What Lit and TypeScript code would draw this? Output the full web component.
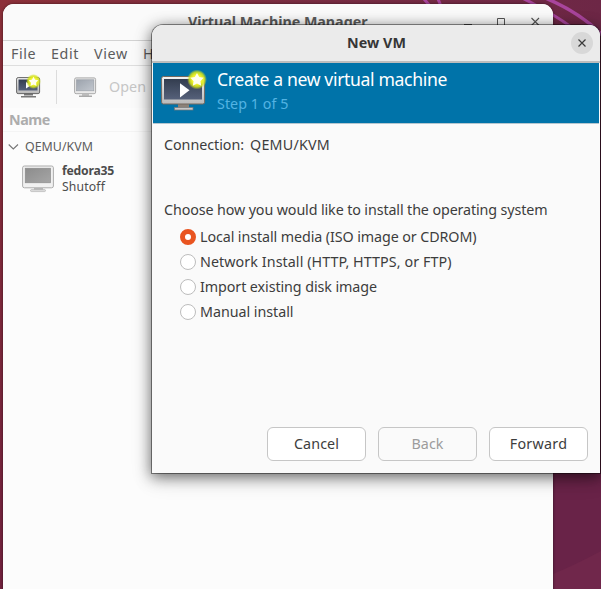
import { LitElement, html, css, svg } from "lit";
import { customElement, property, state } from "lit/decorators.js";

/** A line of text whose tracking is adjusted so that it takes the given width. */
@customElement("fit-text")
class FitText extends LitElement {
  @property() text = "";
  @property({ type: Number }) fit = 0;
  @state() private tracking = 0;

  static styles = css`
    :host { display: inline-block; white-space: pre; line-height: 20px; flex: none; }
    .run { display: inline-block; }
  `;

  firstUpdated() {
    const run = this.renderRoot.querySelector(".run") as HTMLElement;
    const natural = run.getBoundingClientRect().width;
    if (this.fit && natural) this.tracking = (this.fit - natural) / this.text.length;
  }

  render() {
    return html`<span class="run" style="letter-spacing:${this.tracking}px">${this.text}</span>`;
  }
}

const gradients = svg`
  <defs>
    <linearGradient id="case" x1="0" y1="0" x2="0" y2="1">
      <stop offset="0" stop-color="#f4f4f4"/><stop offset="1" stop-color="#b9b9b9"/>
    </linearGradient>
    <linearGradient id="dark" x1="0" y1="0" x2="0" y2="1">
      <stop offset="0" stop-color="#333d4f"/><stop offset="1" stop-color="#56617a"/>
    </linearGradient>
    <linearGradient id="pale" x1="0" y1="0" x2="1" y2="1">
      <stop offset="0" stop-color="#9ca3ad"/><stop offset="1" stop-color="#c2c7ce"/>
    </linearGradient>
    <linearGradient id="grey" x1="0" y1="0" x2="1" y2="1">
      <stop offset="0" stop-color="#8c8c8c"/><stop offset="1" stop-color="#a6a6a6"/>
    </linearGradient>
    <radialGradient id="glow">
      <stop offset="0" stop-color="#fffc9a"/><stop offset=".5" stop-color="#eef22a"/>
      <stop offset=".75" stop-color="#d3e31c" stop-opacity=".85"/><stop offset="1" stop-color="#c9dc22" stop-opacity="0"/>
    </radialGradient>
    <linearGradient id="wall" x1="0" y1="0" x2="601" y2="0" gradientUnits="userSpaceOnUse">
      <stop offset="0" stop-color="#8c3039"/><stop offset=".55" stop-color="#782c42"/><stop offset="1" stop-color="#6d2746"/>
    </linearGradient>
    <linearGradient id="edge" x1="0" y1="0" x2="0" y2="1">
      <stop offset="0" stop-color="#8c3039"/><stop offset="1" stop-color="#73223f"/>
    </linearGradient>
  </defs>`;

const star = "M0-6 2-2.2 6-1.6 3.1 1.5 3.8 5.6 0 3.7-3.8 5.6-3.1 1.5-6-1.6-2-2.2Z";

@customElement("app-root")
class AppRoot extends LitElement {
  @state() private choice = 0;

  private options: [string, number][] = [
    ["Local install media (ISO image or CDROM)", 276.5],
    ["Network Install (HTTP, HTTPS, or FTP)", 251.5],
    ["Import existing disk image", 177],
    ["Manual install", 93.5],
  ];

  static styles = css`
    :host { display: block; font-family: "Noto Sans", "Open Sans", sans-serif; font-size: 14.3px; color: #3d3d3d; }
    .desktop { position: relative; width: 601px; height: 589px; overflow: hidden; background: #6a2346; }
    .wallpaper { position: absolute; inset: 0; }
    svg { display: block; flex: none; }
    .manager { position: absolute; left: 3px; top: 4px; width: 550px; height: 600px; background: #fcfcfc;
      border-radius: 11px 11px 0 0; box-shadow: 0 0 3px rgba(0,0,0,.55); color: #5c5c5c; overflow: hidden; }
    .title { box-sizing: border-box; height: 37px; border-bottom: 1px solid #d2d2d2; display: flex; padding: 8px 13px 0 185px;
      background: #fafafa; font-weight: 700; justify-content: space-between; }
    .controls { display: flex; gap: 25px; padding-top: 4px; }
    .menu { box-sizing: border-box; height: 25px; border-bottom: 1px solid #dedede; display: flex; gap: 15px; padding: 3px 0 0 8px; background: #fafafa; }
    .tools { box-sizing: border-box; height: 42px; display: flex; background: #fafafa; padding-left: 13px; color: #c6c6c6; }
    .tools .new { margin-top: 8px; }
    .rule { width: 1px; height: 34px; background: #dcdcdc; margin: 4px 17px 0 15px; }
    .tools .screen { margin-top: 11px; }
    .tools .open { margin: 11px 0 0 12px; }
    .head { box-sizing: border-box; height: 24px; border-bottom: 1px solid #f4f4f4; font-weight: 700; color: #adadad; padding: 2px 0 0 6px; }
    .group { display: flex; align-items: center; height: 30px; padding-left: 5px; gap: 6px; font-size: 12.4px; }
    .vm { display: flex; padding: 3px 0 0 19px; gap: 8px; font-size: 12.2px; color: #4c4c4c; }
    .lines { display: grid; grid-auto-rows: 16px; margin-top: -2px; }
    .lines fit-text { line-height: 16px; height: 16px; }
    .strong { font-weight: 700; }
    .dialog { position: absolute; left: 152px; top: 25px; width: 448px; height: 448px; background: #fafafa;
      border-radius: 11px 11px 0 0; box-shadow: 0 0 0 1px rgba(0,0,0,.42), 0 3px 14px 1px rgba(0,0,0,.5), 0 6px 22px rgba(0,0,0,.16); }
    .bar { box-sizing: border-box; height: 38px; background: #ebebeb; border-bottom: 2px solid #bdbdbd; border-radius: 11px 11px 0 0;
      display: flex; align-items: center; padding: 0 7px 0 195px; justify-content: space-between; font-weight: 700; color: #363636; }
    .close { width: 22px; height: 22px; border-radius: 50%; background: #d8d8d8; display: grid; place-items: center; }
    .banner { box-sizing: border-box; height: 61px; background: #0073a9; border-bottom: 1px solid #b5c6cf; display: flex; padding: 6px 0 0 8px; gap: 10px; color: #fff; margin: 0 1px; }
    .banner .big { font-size: 17.6px; }
    .banner .step { color: #53b3e3; margin-top: 5px; }
    .col { display: flex; flex-direction: column; }
    .body { padding: 11px 0 0 12px; }
    .conn { display: flex; gap: 6px; height: 65px; }
    .option { display: flex; align-items: center; height: 25px; gap: 4px; padding-left: 16px; }
    .options { margin-top: 4px; }
    .dot { box-sizing: border-box; width: 16px; height: 16px; border-radius: 50%; border: 1px solid #bdbdbd; background: #fff; }
    .dot.on { border: 5.5px solid #e95420; }
    .actions { display: flex; gap: 12px; margin: 103px 0 0 103px; }
    .btn { box-sizing: border-box; width: 99px; height: 34px; border: 1px solid #c6c6c6; border-radius: 6px; background: #fff; display: flex; align-items: center; justify-content: center; }
    .btn.off { background: #fafafa; color: #9c9c9c; }
  `;

  render() {
    return html`<div class="desktop">
      <svg class="wallpaper" width="601" height="589" viewBox="0 0 601 589">
        ${gradients}
        <rect width="601" height="589" fill="#692348"/>
        <rect width="601" height="130" fill="url(#wall)"/>
        <rect width="6" height="589" fill="url(#edge)"/>
        <path d="M553 574Q575 565 601 551V589H553Z" fill="#70274b"/>
        <g fill="none" stroke="#a9459d" stroke-width="3">
          <path d="M424-1 430 6M438-1 441 6M518-4Q562 17 590 42"/>
          <path d="M543-3Q582 13 605 38" stroke-width="3.5"/>
        </g>
      </svg>

      <div class="manager">
        <div class="title"><fit-text text="Virtual Machine Manager" fit="179.5"></fit-text>
          <div class="controls">
            <svg width="8" height="12" viewBox="0 0 8 12"><path d="M0 8.5H8" stroke="#555"/></svg>
            <svg width="9" height="12" viewBox="0 0 9 12"><path d="M.5 2.5H7.5V10.5H.5Z" fill="none" stroke="#555"/></svg>
            <svg width="9" height="12" viewBox="0 0 9 12"><path d="M.5 2 8 9.5M8 2 .5 9.5" stroke="#555" stroke-width="1.1"/></svg>
          </div>
        </div>
        <div class="menu">
          <fit-text text="File" fit="25"></fit-text><fit-text text="Edit" fit="28"></fit-text>
          <fit-text text="View" fit="34"></fit-text><fit-text text="Help" fit="33"></fit-text>
        </div>
        <div class="tools">
          <svg class="new" width="25" height="26" viewBox="0 0 25 26">
            <path d="M8 19h9v2.5H8z" fill="#777"/><path d="M5 22h15v1.5H5z" fill="#777"/>
            <rect x=".6" y="3.6" width="23" height="16" rx="1.5" fill="url(#case)" stroke="#666"/>
            <rect x="2.5" y="5.5" width="19" height="11" fill="url(#dark)"/>
            <path d="M10 8 15 11.2 10 14.5Z" fill="#fff"/>
            <circle cx="17.5" cy="7.5" r="7.5" fill="url(#glow)"/><path d=${star} transform="translate(17.5 7.5) scale(.8)" fill="#fffff0"/>
          </svg>
          <div class="rule"></div>
          <svg class="screen" width="23" height="22" viewBox="0 0 23 22">
            <path d="M8 17h7v2H8z" fill="#c2c2c2"/><path d="M5 18.6h13v1.4H5z" fill="#a9a9a9"/>
            <rect x=".6" y=".9" width="21" height="15.8" rx="1.5" fill="#e9e9e9" stroke="#aaa"/>
            <rect x="2.5" y="2.8" width="17.3" height="11" fill="url(#pale)" stroke="#969ca4" stroke-width=".6"/>
          </svg>
          <fit-text class="open" text="Open" fit="37"></fit-text>
        </div>
        <div class="head"><fit-text text="Name" fit="41"></fit-text></div>
        <div class="group">
          <svg width="11" height="8" viewBox="0 0 11 8"><path d="M.7 1.5 5.3 6 10 1.5" fill="none" stroke="#777" stroke-width="1.1"/></svg>
          <fit-text text="QEMU/KVM" fit="68"></fit-text>
        </div>
        <div class="vm">
          <svg width="32" height="28" viewBox="0 0 32 28">
            <path d="M12 23h9v2h-9z" fill="#bbb"/><rect x="8.5" y="24.6" width="15" height="2" rx="1" fill="#ddd" stroke="#aaa" stroke-width=".6"/>
            <rect x=".6" y="1" width="30.8" height="21.8" rx="1.8" fill="#f1f1f1" stroke="#acacac"/>
            <rect x="3.2" y="3.2" width="25.4" height="14.6" fill="url(#grey)" stroke="#888" stroke-width=".6"/>
          </svg>
          <div class="lines"><fit-text class="strong" text="fedora35" fit="52"></fit-text><fit-text text="Shutoff" fit="43"></fit-text></div>
        </div>
      </div>

      <div class="dialog">
        <div class="bar"><fit-text text="New VM" fit="59"></fit-text>
          <span class="close"><svg width="8" height="8" viewBox="0 0 8 8"><path d="M.5.5 7.5 7.5M7.5.5.5 7.5" stroke="#3a3a3a" stroke-width="1.2"/></svg></span></div>
        <div class="banner">
          <svg width="46" height="44" viewBox="0 0 46 44">
            <path d="M17 35h11v4H17z" fill="#8b8178"/><rect x="13.5" y="38.5" width="18.5" height="2.5" fill="#c8c8c8" stroke="#777" stroke-width=".7"/>
            <rect x=".6" y="7.5" width="43" height="27.5" rx="1.8" fill="url(#case)" stroke="#75695f"/>
            <rect x="3" y="10" width="38" height="20.5" fill="url(#dark)"/>
            <path d="M19 14.2V28.5L28.5 21.2Z" fill="#fff"/>
            <circle cx="36" cy="10.5" r="10" fill="url(#glow)"/><path d=${star} transform="translate(36 10.5) scale(1.1)" fill="#fffff0"/>
          </svg>
          <div class="col"><fit-text class="big" text="Create a new virtual machine" fit="230"></fit-text>
            <fit-text class="step" text="Step 1 of 5" fit="71.5"></fit-text></div>
        </div>
        <div class="body">
          <div class="conn"><fit-text text="Connection:" fit="80"></fit-text><fit-text text="QEMU/KVM" fit="80"></fit-text></div>
          <fit-text text="Choose how you would like to install the operating system" fit="383.5"></fit-text>
          <div class="options">
            ${this.options.map(([text, width], i) => html`<div class="option" @click=${() => (this.choice = i)}>
              <span class="dot ${this.choice === i ? "on" : ""}"></span><fit-text .text=${text} .fit=${width}></fit-text></div>`)}
          </div>
          <div class="actions">
            <div class="btn"><fit-text text="Cancel" fit="45"></fit-text></div>
            <div class="btn off"><fit-text text="Back" fit="32"></fit-text></div>
            <div class="btn"><fit-text text="Forward" fit="57.5"></fit-text></div>
          </div>
        </div>
      </div>
    </div>`;
  }
}
